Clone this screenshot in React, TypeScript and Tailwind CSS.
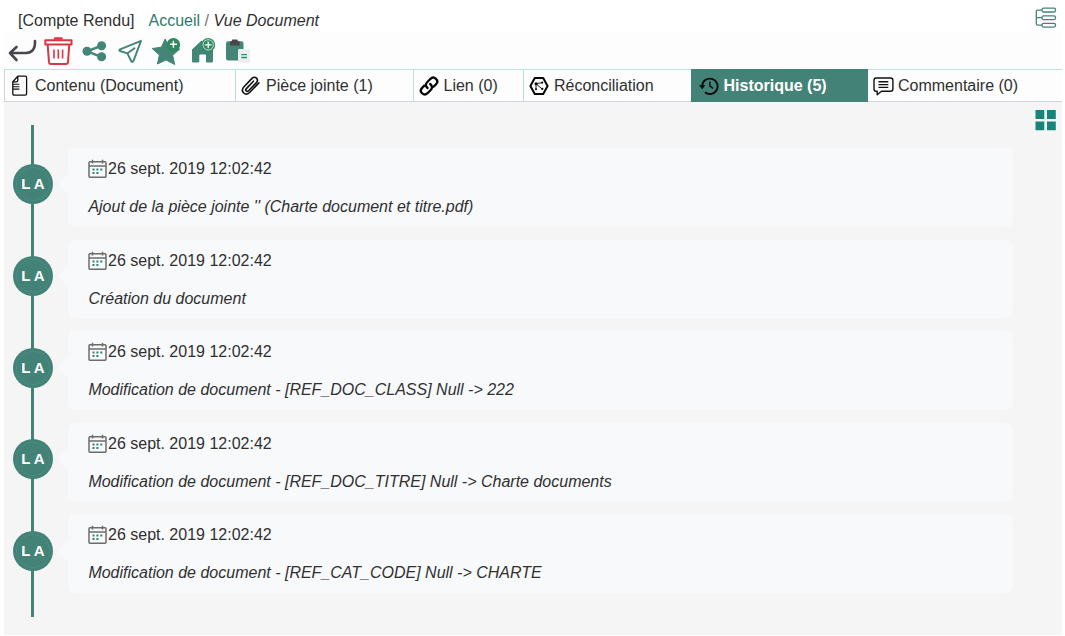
import type { ReactNode } from 'react';

const entries = [
  `Ajout de la pièce jointe '' (Charte document et titre.pdf)`,
  'Création du document',
  'Modification de document - [REF_DOC_CLASS] Null -> 222',
  'Modification de document - [REF_DOC_TITRE] Null -> Charte documents',
  'Modification de document - [REF_CAT_CODE] Null -> CHARTE',
];

function Toolbar() {
  return (
    <div className="flex h-[36px] items-start bg-[#fdfdfd]">
      <svg className="mt-[2px] ml-[3px] h-[32px] w-[32px] shrink-0" viewBox="7 35 32 32" fill="none" stroke="#47474b" strokeWidth="2.6" strokeLinecap="round" strokeLinejoin="round">
        <path d="M35 41C35.3 49 32 53 26 53H10M16.5 47L10 53L16.5 60" />
      </svg>
      <svg className="mt-[2px] ml-[4px] h-[32px] w-[32px] shrink-0" viewBox="43 35 32 32" fill="none" stroke="#dc3545" strokeWidth="2" strokeLinejoin="round">
        <path d="M45.3 40.2H71.5V44.5H45.3ZM47.7 45L49 62.2Q49.2 64 51 64H66Q67.8 64 68 62.2L69.2 45" />
        <path d="M55 38.5H61.5" strokeWidth="2.4" strokeLinecap="round" />
        <path d="M54 49.5V58.5M58.3 49.5V58.5M62.6 49.5V58.5" strokeWidth="1.6" />
      </svg>
      <svg className="mt-[2px] ml-[4px] h-[32px] w-[32px] shrink-0" viewBox="79 35 32 32" fill="#438577">
        <path d="M87 51.3L102 45.5M87 51.3L102 57.2" stroke="#438577" strokeWidth="2.5" />
        <circle cx="87" cy="51.3" r="4.5" /><circle cx="101.6" cy="45.8" r="4.5" /><circle cx="101.6" cy="56.8" r="4.5" />
      </svg>
      <svg className="mt-[2px] ml-[4px] h-[32px] w-[32px] shrink-0" viewBox="115 35 32 32" fill="none" stroke="#438577" strokeWidth="1.9" strokeLinejoin="round" strokeLinecap="round">
        <path d="M141 40.8L119.5 49.7Q119 50.7 120 51L127.4 53.4L131.4 61.5Q132.6 62.5 133.5 60.8ZM127.5 53.3L134.5 48.2" />
      </svg>
      <svg className="mt-[2px] ml-[4px] h-[32px] w-[32px] shrink-0" viewBox="151 35 32 32">
        <path d="M165.2 39L169 47.2L179.8 49L172.6 55.3L174.8 64.5L166 60L157.4 64L159.4 55L152.2 48.5L161.4 47.2Z" fill="#438577" stroke="#438577" strokeWidth="1" strokeLinejoin="round" />
        <circle cx="173.4" cy="44.7" r="6.8" fill="#318960" />
        <path d="M170 44.3H177M173.4 40.8V47.8" stroke="#fff" strokeWidth="1.4" />
      </svg>
      <svg className="mt-[2px] ml-[4px] h-[32px] w-[32px] shrink-0" viewBox="187 35 32 32">
        <path d="M192 49.5L201.5 40.5L213 50V61.2Q213 62.5 211.8 62.5H207Q206 62.5 206 61.5V55.5Q206 54.4 205 54.4H200.4Q199.3 54.4 199.3 55.5V61.5Q199.3 62.5 198.2 62.5H193.2Q192 62.5 192 61.2Z" fill="#438577" />
        <circle cx="208.2" cy="44.9" r="7" fill="#318960" />
        <circle cx="208.2" cy="44.9" r="5.2" fill="none" stroke="#d4e9de" strokeWidth=".9" />
        <path d="M204.8 44.9H211.6M208.2 41.5V48.3" stroke="#fff" strokeWidth="1.3" />
      </svg>
      <svg className="mt-[2px] ml-[4px] h-[32px] w-[32px] shrink-0" viewBox="223 35 32 32">
        <rect x="226" y="41.2" width="17.5" height="19.3" rx="2.2" fill="#438577" />
        <path d="M230 45.5V42.3Q230 41.3 231.5 41.2L232.3 39.6H237.2L238 41.2Q239.7 41.3 239.7 42.3V45.5Z" fill="#47474b" />
        <rect x="238" y="49" width="12" height="14" rx="1.2" fill="#eceff1" />
        <path d="M241.3 54.6H247M241.3 57.5H247" stroke="#23916b" strokeWidth="1.3" />
      </svg>
    </div>
  );
}

function DocIcon() {
  return (
    <svg className="h-[22px] w-[18px] shrink-0" viewBox="0 0 18 22" fill="none" stroke="#111" strokeWidth="1.3" strokeLinejoin="round">
      <path d="M6.8 1.2H14.2Q15.6 1.2 15.6 2.6V18.8Q15.6 20.2 14.2 20.2H3.2Q1.8 20.2 1.8 18.8V6.8ZM6.8 1.2V5.2Q6.8 6.8 5.3 6.8H1.8" />
      <path d="M2 9.3H8.4M2 11.7H8.4M2 14.1H8.4" strokeWidth="1.1" />
    </svg>
  );
}

function ClipIcon() {
  return (
    <svg className="h-[22px] w-[20px] shrink-0" viewBox="0 0 20 22" fill="none" stroke="#111" strokeWidth="1.6" strokeLinecap="round" strokeLinejoin="round">
      <path d="M12.4 6.2L5.4 13.6C3.8 15.4 6 17.4 7.6 15.8L15.4 7.6C18.2 4.4 14.2 .4 11 3.4L3 11.8C-1.2 16.4 4.4 21.8 8.9 17.3L17.9 7.9" />
    </svg>
  );
}

function LinkIcon() {
  return (
    <svg className="h-[22px] w-[20px] shrink-0" viewBox="0 0 20 22" fill="none" stroke="#050505" strokeWidth="2.3" strokeLinecap="round" strokeLinejoin="round">
      <path d="M8.5 13C6.5 11.3 6.4 8.9 8.1 7.2L11.5 3.8C15.1 .4 20.5 5.4 17.2 9.1L14.5 11.8" />
      <path d="M11.2 9C13.4 10.7 13.5 13.2 11.7 15L8.5 18.2C4.9 21.6 -.4 16.7 2.9 13.1L5.3 10.6" />
    </svg>
  );
}

function HexIcon() {
  return (
    <svg className="h-[22px] w-[20px] shrink-0" viewBox="0 0 20 22" fill="none" stroke="#050505">
      <path d="M5.8 3H14.2L18.6 11L14.2 19H5.8L1.4 11Z" strokeWidth="2" strokeLinejoin="round" />
      <path d="M7 14.3V8.4M7 8.8L13.2 14M7.2 8.6L13.3 7.7" strokeWidth=".9" />
      <g fill="#050505" stroke="none"><circle cx="7" cy="8.7" r="1.5" /><circle cx="13.2" cy="7.6" r="1.1" /><circle cx="13.3" cy="13.9" r="1.1" /><circle cx="7" cy="14.3" r="1" /></g>
    </svg>
  );
}

function HistoryIcon() {
  return (
    <svg className="h-[22px] w-[20px] shrink-0" viewBox="0 0 20 22" fill="none" stroke="#0a0a0a" strokeWidth="1.8">
      <path d="M3.2 11A7.7 7.7 0 1 1 6 17.2" />
      <path d="M10.9 6.4V11.2L14.1 13.3" strokeWidth="1.4" />
      <path d="M0 10.3H6.3L3.2 14.2Z" fill="#0a0a0a" stroke="none" />
    </svg>
  );
}

function CommentIcon() {
  return (
    <svg className="h-[22px] w-[21px] shrink-0" viewBox="0 0 21 22" fill="none" stroke="#111" strokeWidth="1.4" strokeLinejoin="round">
      <path d="M3.2 3H17.6Q19.9 3 19.9 5.2V14Q19.9 16.3 17.6 16.3H8.5L4.2 19.8V16.3H3.2Q1 16.3 1 14V5.2Q1 3 3.2 3Z" />
      <path d="M5.5 6.8H15.3M5.5 9.6H15.3M5.5 12.4H15.3" />
    </svg>
  );
}

function CalendarIcon() {
  return (
    <svg className="h-[20px] w-[19px] shrink-0" viewBox="0 0 19 20" fill="none" stroke="#6c6c6c" strokeWidth="1.5">
      <path d="M1.9 2.8H17.1Q18 2.8 18 3.7V17.3Q18 18.2 17.1 18.2H1.9Q1 18.2 1 17.3V3.7Q1 2.8 1.9 2.8ZM1 7H18M4.5 .8V4.5M14.5 .8V4.5" />
      <path d="M4.5 10.6H6.5M8.4 10.6H10.4M12.3 10.6H14.3M4.5 14.1H6.5M8.4 14.1H10.4" stroke="#2a8576" strokeWidth="2" />
    </svg>
  );
}

function Tab({ className, children }: { className: string; children: ReactNode }) {
  return <div className={`flex shrink-0 items-center whitespace-nowrap ${className}`}>{children}</div>;
}

export default function App() {
  return (
    <div className="h-[636px] w-[1065px] overflow-hidden bg-white pr-[3px] pl-[4px] font-['Liberation_Sans',Arial,sans-serif] text-[16px] leading-[20px] text-[#303030]">
      <header className="flex h-[33px] items-start justify-between">
        <div className="flex pt-[11px] pl-[14px] whitespace-pre">
          <span className="w-[130.5px]">[Compte Rendu]</span>
          <span className="text-[#33796b]">Accueil</span>
          <span className="text-[#6c757d]"> / </span>
          <em>Vue Document</em>
        </div>
        <svg className="mt-[7px] mr-[5px] h-[22px] w-[22px]" viewBox="0 0 22 22" fill="none" stroke="#438577" strokeWidth="1.3">
          <rect x="7" y="1.2" width="13.5" height="3.8" rx="1.5" />
          <rect x="7" y="8.8" width="13.5" height="3.8" rx="1.5" />
          <rect x="7" y="16.3" width="13.5" height="3.8" rx="1.5" />
          <path d="M7 3.1H3Q1.3 3.1 1.3 4.8V16.5Q1.3 18.2 3 18.2H7M1.3 10.7H7" />
        </svg>
      </header>
      <Toolbar />
      <nav className="flex h-[33px] border-y border-t-[#bfe3df] border-b-[#cfd4da] bg-[#fdfdfd]">
        <Tab className="w-[232px] border-r border-l border-r-[#b9e0dc] border-l-[#cfd4da] pl-[6px]"><DocIcon /><span className="ml-[6px]">Contenu (Document)</span></Tab>
        <Tab className="w-[178px] border-r border-[#b9e0dc] pl-[5px]"><ClipIcon /><span className="ml-[5px]">Pièce jointe (1)</span></Tab>
        <Tab className="w-[110px] border-r border-[#b9e0dc] pl-[5px]"><LinkIcon /><span className="ml-[4.5px]">Lien (0)</span></Tab>
        <Tab className="w-[167px] pl-[5px]"><HexIcon /><span className="ml-[5px]">Réconciliation</span></Tab>
        <Tab className="-my-px w-[177px] bg-[#438377] pl-[8px] font-bold text-white"><HistoryIcon /><span className="ml-[4.5px]">Historique (5)</span></Tab>
        <Tab className="w-[194px] pl-[5px]"><CommentIcon /><span className="ml-[4px]">Commentaire (0)</span></Tab>
      </nav>
      <main className="flex h-[533px] bg-[#f5f5f5]">
        <div className="relative w-[1009px] pt-[46.3px]">
          <div className="absolute top-[23px] left-[26.7px] h-[492px] w-[3px] bg-[#438377]" />
          <div className="flex flex-col gap-[13.3px]">
            {entries.map((text) => (
              <div key={text} className="relative flex h-[78.3px]">
                <div className="mt-[16.2px] ml-[9px] flex size-[40px] items-center justify-center rounded-full bg-[#438377] p-[3px]">
                  <div className="flex size-[34px] items-center justify-center rounded-full border border-[#4b8c80] text-[15px] font-bold text-white"><span>L A</span></div>
                </div>
                <svg className="mt-[25px] ml-[5px] h-[22px] w-[10px]" viewBox="0 0 10 22" fill="#f8f9fb"><path d="M0 11L10 0V22Z" /></svg>
                <article className="w-[945px] rounded-[7px] bg-[#f8f9fb] pt-[10.7px] pl-[20.4px]">
                  <div className="flex h-[20px] items-center"><CalendarIcon /><time className="ml-[0.6px]">26 sept. 2019 12:02:42</time></div>
                  <p className="mt-[18px] italic">{text}</p>
                </article>
              </div>
            ))}
          </div>
        </div>
        <svg className="mt-[8px] ml-[22px] h-[21px] w-[21px]" viewBox="0 0 21 21" fill="#18857a">
          <path d="M.5 0H9.3V9H.5ZM12 0H20.8V9H12ZM.5 11.5H9.3V20.2H.5ZM12 11.5H20.8V20.2H12Z" />
        </svg>
      </main>
    </div>
  );
}
